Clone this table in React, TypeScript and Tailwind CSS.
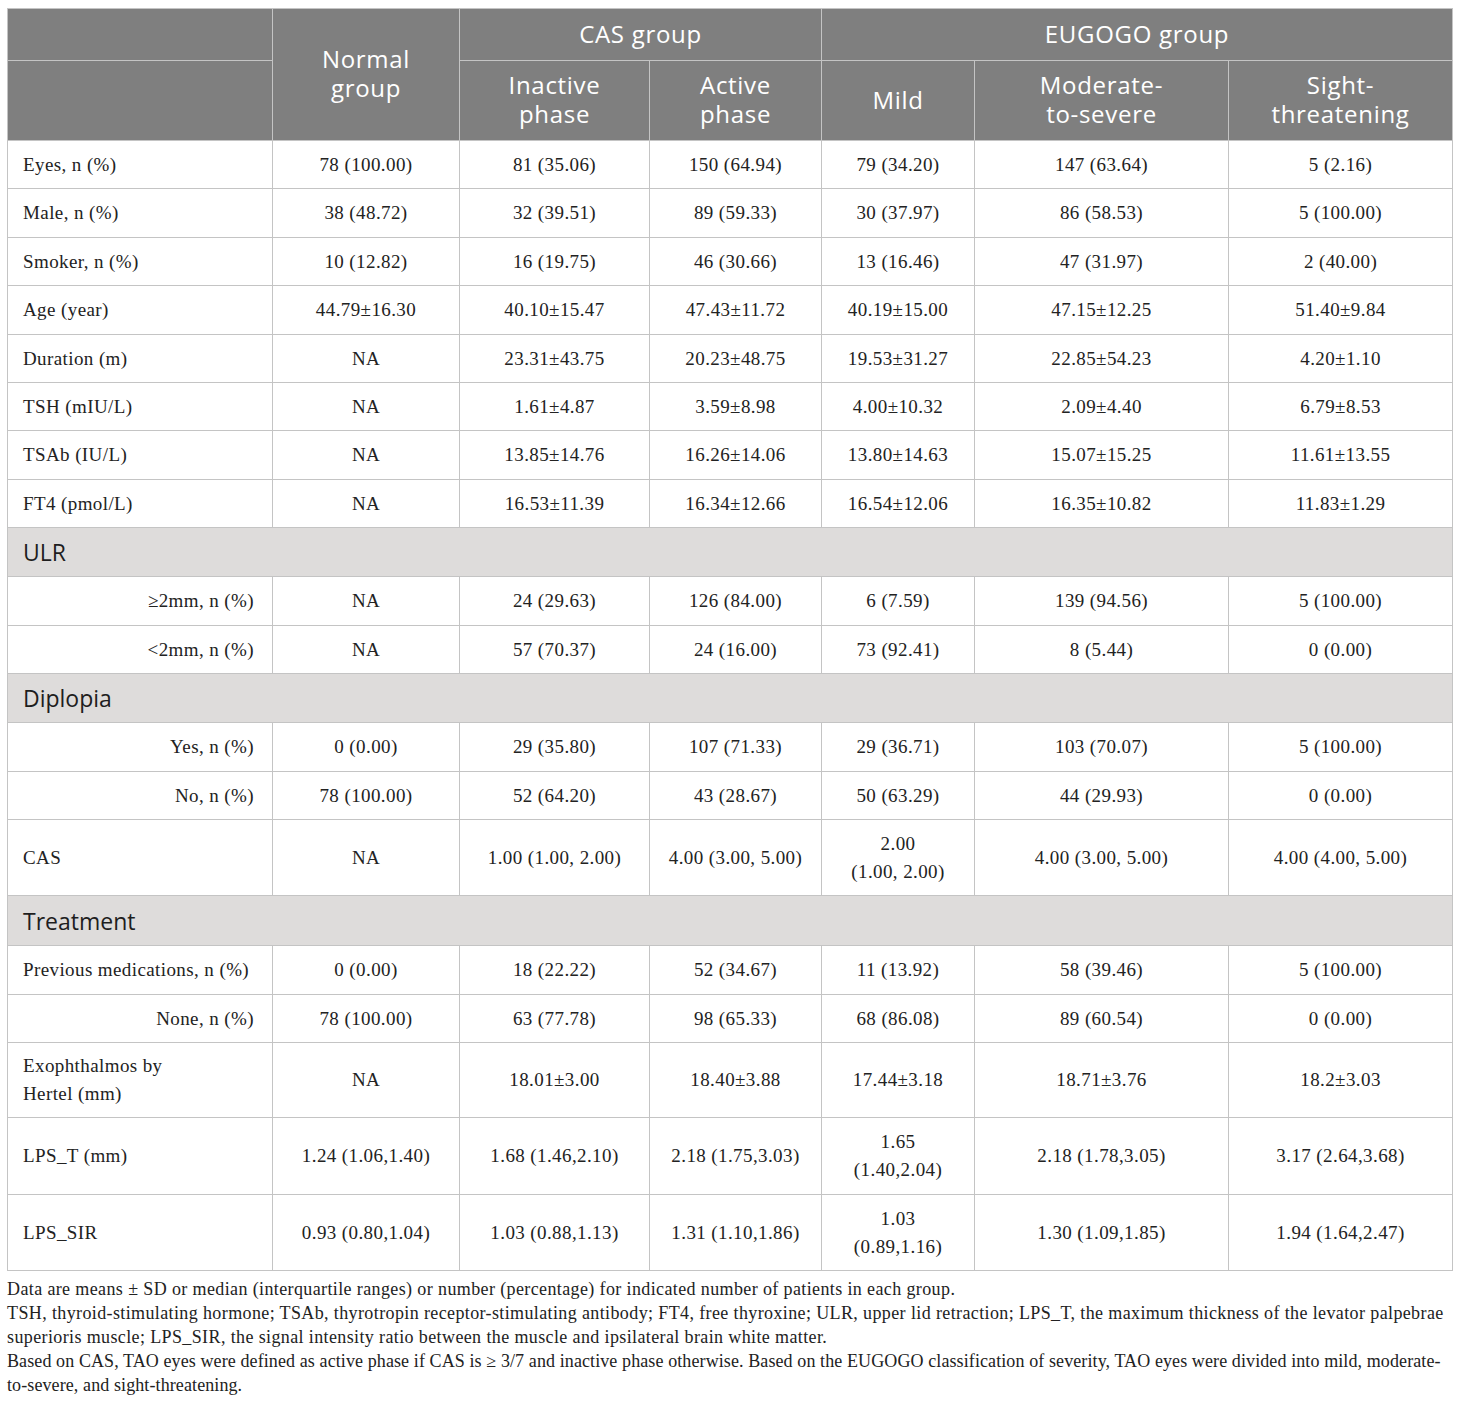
import React from 'react'

type Row =
  | { kind: 'data'; label: string; indent?: boolean; h: string; cells: React.ReactNode[] }
  | { kind: 'section'; label: string; h: string }

const two = (a: string, b: string) => (
  <>
    {a}
    <br />
    {b}
  </>
)

const rows: Row[] = [
  { kind: 'data', label: 'Eyes, n (%)', h: 'h-[48px]', cells: ['78 (100.00)', '81 (35.06)', '150 (64.94)', '79 (34.20)', '147 (63.64)', '5 (2.16)'] },
  { kind: 'data', label: 'Male, n (%)', h: 'h-[49px]', cells: ['38 (48.72)', '32 (39.51)', '89 (59.33)', '30 (37.97)', '86 (58.53)', '5 (100.00)'] },
  { kind: 'data', label: 'Smoker, n (%)', h: 'h-[48px]', cells: ['10 (12.82)', '16 (19.75)', '46 (30.66)', '13 (16.46)', '47 (31.97)', '2 (40.00)'] },
  { kind: 'data', label: 'Age (year)', h: 'h-[49px]', cells: ['44.79±16.30', '40.10±15.47', '47.43±11.72', '40.19±15.00', '47.15±12.25', '51.40±9.84'] },
  { kind: 'data', label: 'Duration (m)', h: 'h-[48px]', cells: ['NA', '23.31±43.75', '20.23±48.75', '19.53±31.27', '22.85±54.23', '4.20±1.10'] },
  { kind: 'data', label: 'TSH (mIU/L)', h: 'h-[48px]', cells: ['NA', '1.61±4.87', '3.59±8.98', '4.00±10.32', '2.09±4.40', '6.79±8.53'] },
  { kind: 'data', label: 'TSAb (IU/L)', h: 'h-[49px]', cells: ['NA', '13.85±14.76', '16.26±14.06', '13.80±14.63', '15.07±15.25', '11.61±13.55'] },
  { kind: 'data', label: 'FT4 (pmol/L)', h: 'h-[48px]', cells: ['NA', '16.53±11.39', '16.34±12.66', '16.54±12.06', '16.35±10.82', '11.83±1.29'] },
  { kind: 'section', label: 'ULR', h: 'h-[49px]' },
  { kind: 'data', label: '≥2mm, n (%)', indent: true, h: 'h-[49px]', cells: ['NA', '24 (29.63)', '126 (84.00)', '6 (7.59)', '139 (94.56)', '5 (100.00)'] },
  { kind: 'data', label: '<2mm, n (%)', indent: true, h: 'h-[48px]', cells: ['NA', '57 (70.37)', '24 (16.00)', '73 (92.41)', '8 (5.44)', '0 (0.00)'] },
  { kind: 'section', label: 'Diplopia', h: 'h-[49px]' },
  { kind: 'data', label: 'Yes, n (%)', indent: true, h: 'h-[49px]', cells: ['0 (0.00)', '29 (35.80)', '107 (71.33)', '29 (36.71)', '103 (70.07)', '5 (100.00)'] },
  { kind: 'data', label: 'No, n (%)', indent: true, h: 'h-[48px]', cells: ['78 (100.00)', '52 (64.20)', '43 (28.67)', '50 (63.29)', '44 (29.93)', '0 (0.00)'] },
  { kind: 'data', label: 'CAS', h: 'h-[76px]', cells: ['NA', '1.00 (1.00, 2.00)', '4.00 (3.00, 5.00)', two('2.00', '(1.00, 2.00)'), '4.00 (3.00, 5.00)', '4.00 (4.00, 5.00)'] },
  { kind: 'section', label: 'Treatment', h: 'h-[50px]' },
  { kind: 'data', label: 'Previous medications, n (%)', h: 'h-[49px]', cells: ['0 (0.00)', '18 (22.22)', '52 (34.67)', '11 (13.92)', '58 (39.46)', '5 (100.00)'] },
  { kind: 'data', label: 'None, n (%)', indent: true, h: 'h-[48px]', cells: ['78 (100.00)', '63 (77.78)', '98 (65.33)', '68 (86.08)', '89 (60.54)', '0 (0.00)'] },
  { kind: 'data', label: 'Exophthalmos by Hertel (mm)', h: 'h-[75px]', cells: ['NA', '18.01±3.00', '18.40±3.88', '17.44±3.18', '18.71±3.76', '18.2±3.03'] },
  { kind: 'data', label: 'LPS_T (mm)', h: 'h-[77px]', cells: ['1.24 (1.06,1.40)', '1.68 (1.46,2.10)', '2.18 (1.75,3.03)', two('1.65', '(1.40,2.04)'), '2.18 (1.78,3.05)', '3.17 (2.64,3.68)'] },
  { kind: 'data', label: 'LPS_SIR', h: 'h-[76px]', cells: ['0.93 (0.80,1.04)', '1.03 (0.88,1.13)', '1.31 (1.10,1.86)', two('1.03', '(0.89,1.16)'), '1.30 (1.09,1.85)', '1.94 (1.64,2.47)'] },
]

const sans = "font-['Open_Sans','Noto_Sans',sans-serif]"
const serif = "font-['Liberation_Serif','Times_New_Roman',serif]"
const cell = 'border border-[#c4c4c4]'

// each header line is its own block so the two lines sit 29px apart
function Lines({ a, b }: { a: string; b?: string }) {
  return (
    <div className="flex flex-col items-center pb-[3px]">
      <span className="block h-[29px] leading-[29px]">{a}</span>
      {b && <span className="block h-[29px] leading-[29px]">{b}</span>}
    </div>
  )
}

export default function App() {
  return (
    <div className="min-h-[1406px] w-[1460px] bg-white pl-[7px] pr-[8px] pt-[8px]">
      <table className="w-[1445px] table-fixed border-collapse">
        <colgroup>
          <col className="w-[265px]" />
          <col className="w-[187px]" />
          <col className="w-[190px]" />
          <col className="w-[172px]" />
          <col className="w-[153px]" />
          <col className="w-[254px]" />
          <col className="w-[224px]" />
        </colgroup>
        <thead className={`${sans} bg-[#7f7f7f] text-[24px] tracking-[0.7px] text-white`}>
          <tr className="h-[52px]">
            <th className={`${cell} font-normal`} />
            <th rowSpan={2} className={`${cell} font-normal`}>
              <Lines a="Normal" b="group" />
            </th>
            <th colSpan={2} className={`${cell} font-normal`}>
              <Lines a="CAS group" />
            </th>
            <th colSpan={3} className={`${cell} font-normal`}>
              <Lines a="EUGOGO group" />
            </th>
          </tr>
          <tr className="h-[80px]">
            <th className={`${cell} font-normal`} />
            <th className={`${cell} font-normal`}>
              <Lines a="Inactive" b="phase" />
            </th>
            <th className={`${cell} font-normal`}>
              <Lines a="Active" b="phase" />
            </th>
            <th className={`${cell} font-normal`}>
              <Lines a="Mild" />
            </th>
            <th className={`${cell} font-normal`}>
              <Lines a="Moderate-" b="to-severe" />
            </th>
            <th className={`${cell} font-normal`}>
              <Lines a="Sight-" b="threatening" />
            </th>
          </tr>
        </thead>
        <tbody className={`${serif} text-[19px] leading-[28px] tracking-[0.4px] text-[#222]`}>
          {rows.map((r) =>
            r.kind === 'section' ? (
              <tr key={r.label} className={`${r.h} bg-[#dedcdb]`}>
                <td colSpan={7} className={`${sans} ${cell} pl-[15px] text-[23px] tracking-normal text-[#1e1e1e]`}>
                  {r.label}
                </td>
              </tr>
            ) : (
              <tr key={r.label} className={r.h}>
                <td className={`${cell} ${r.indent ? 'pr-[18px] text-right' : 'pl-[15px] pr-[8px] text-left'}`}>
                  {r.label === 'Exophthalmos by Hertel (mm)' ? two('Exophthalmos by', 'Hertel (mm)') : r.label}
                </td>
                {r.cells.map((c, i) => (
                  <td key={i} className={`${cell} text-center`}>
                    {c}
                  </td>
                ))}
              </tr>
            )
          )}
        </tbody>
      </table>
      <div className={`${serif} mt-[6px] text-[18px] leading-[24px] tracking-[0.38px] text-[#222]`}>
        <p>
          Data are means ± SD or median (interquartile ranges) or number (percentage) for indicated number of patients in
          each group.
        </p>
        <p>
          TSH, thyroid-stimulating hormone; TSAb, thyrotropin receptor-stimulating antibody; FT4, free thyroxine; ULR,
          upper lid retraction; LPS_T, the maximum thickness of the levator palpebrae superioris muscle; LPS_SIR, the
          signal intensity ratio between the muscle and ipsilateral brain white matter.
        </p>
        <p className="tracking-[0.1px]">
          Based on CAS, TAO eyes were defined as active phase if CAS is ≥ 3/7 and inactive phase otherwise. Based on the
          EUGOGO classification of severity, TAO eyes were divided into mild, moderate-to-severe, and sight-threatening.
        </p>
      </div>
    </div>
  )
}
